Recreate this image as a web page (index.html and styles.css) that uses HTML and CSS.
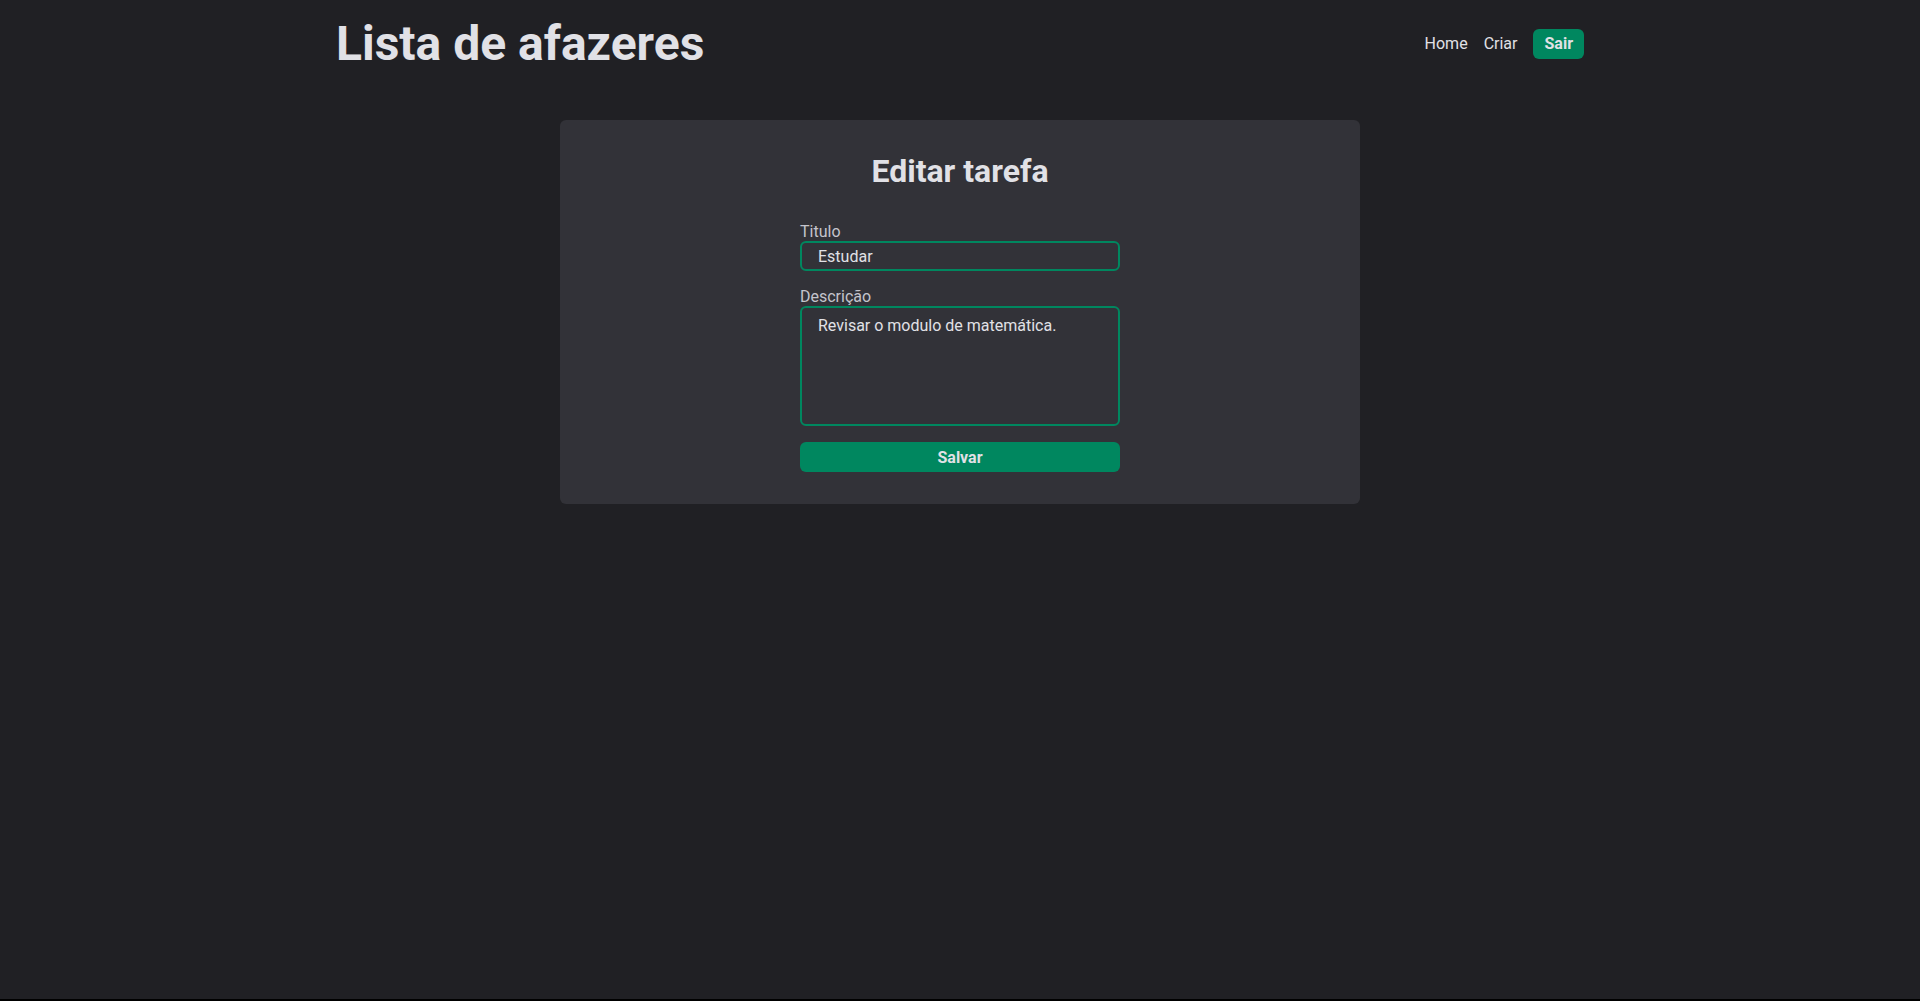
FILE: index.html
```
<!DOCTYPE html>
<html lang="pt-BR">
<head>
<meta charset="utf-8">
<meta name="viewport" content="width=device-width, initial-scale=1">
<title>Lista de afazeres</title>
<link rel="stylesheet" href="styles.css">
</head>
<body>
<header class="header">
  <h1 class="title">Lista de afazeres</h1>
  <nav class="nav">
    <a class="link" href="#">Home</a>
    <a class="link" href="#">Criar</a>
    <button class="button" type="button">Sair</button>
  </nav>
</header>
<main class="card">
  <h2 class="heading">Editar tarefa</h2>
  <form class="form">
    <div class="field">
      <label for="titulo">Titulo</label>
      <input class="control" id="titulo" type="text" value="Estudar">
    </div>
    <div class="field">
      <label for="descricao">Descrição</label>
      <textarea class="control area" id="descricao" spellcheck="false">Revisar o modulo de matemática.</textarea>
    </div>
    <button class="button" type="submit">Salvar</button>
  </form>
</main>
</body>
</html>
```
FILE: styles.css
```
* {
  box-sizing: border-box;
  margin: 0;
  padding: 0;
}

html {
  min-height: 100%;
  background: #202024;
  border-bottom: 2px solid #000;
}

body {
  color: #c4c4cc;
  font: 16px/19px Roboto, sans-serif;
}

.header {
  display: flex;
  align-items: center;
  justify-content: space-between;
  width: 65%;
  margin: 0 auto;
  padding: 14px 0;
}

.title {
  color: #e1e1e6;
  font-size: 48px;
  line-height: 59px;
}

.nav {
  display: flex;
  align-items: center;
  gap: 16px;
}

.link {
  color: #e1e1e6;
  text-decoration: none;
}

.button {
  height: 30px;
  padding: 0 11px;
  border: 0;
  border-radius: 6px;
  background: #00875f;
  color: #e1e1e6;
  font: bold 16px/19px Roboto, sans-serif;
}

.card {
  display: flex;
  flex-direction: column;
  align-items: center;
  gap: 32px;
  width: 90%;
  max-width: 800px;
  margin: 33px auto 0;
  padding: 32px;
  border-radius: 6px;
  background: #323238;
}

.heading {
  color: #e1e1e6;
  font-size: 32px;
  line-height: 38px;
}

.form {
  display: flex;
  flex-direction: column;
  gap: 16px;
  width: 100%;
  max-width: 320px;
}

.field {
  display: flex;
  flex-direction: column;
}

.control {
  height: 30px;
  padding: 0 16px;
  border: 2px solid #00875f;
  border-radius: 6px;
  background: transparent;
  color: #e1e1e6;
  font: 16px/19px Roboto, sans-serif;
}

.area {
  height: 120px;
  padding: 8px 16px;
  resize: none;
}
```
